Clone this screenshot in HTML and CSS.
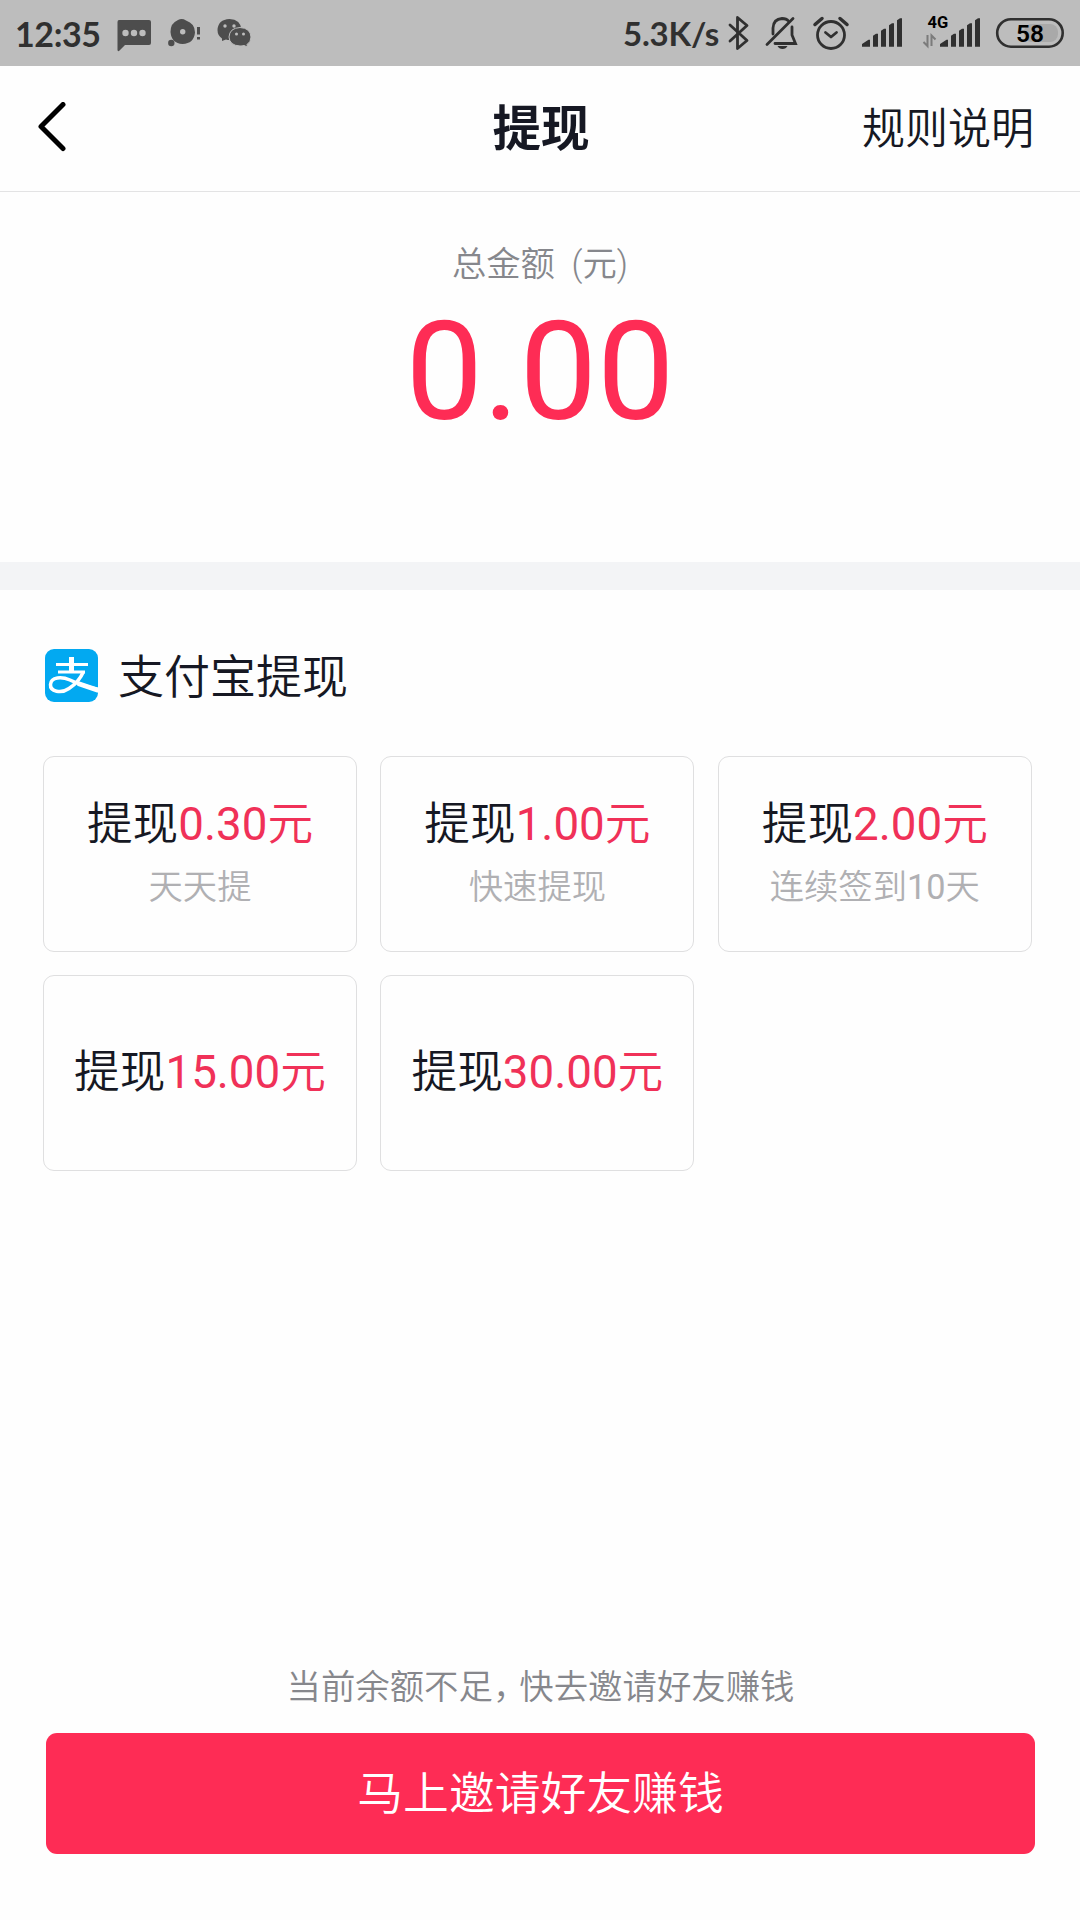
FILE: index.html
```html
<!DOCTYPE html>
<html lang="zh-CN">
<head>
<meta charset="utf-8">
<title>提现</title>
<link rel="stylesheet" href="styles.css">
</head>
<body>

<!-- status bar -->
<div class="status">
    <span class="time">12:35</span>
    <svg class="left-icons" width="136" height="40" viewBox="116 13 136 40">
        <path d="M119 20h30q2 0 2 2v21q0 2-2 2h-24l-6 6q-1.500.5-1.500-1v-28q0-2 1.500-2z" fill="#4d4d4d"/>
        <g fill="#bdbdbd"><circle cx="125.500" cy="33" r="3.200"/><circle cx="134" cy="33" r="3.200"/><circle cx="142.500" cy="33" r="3.200"/></g>
        <path d="M178 20q4-2 8 .5q9 3 9 12q-1 11-12.500 11.500q-11-.5-12-12q0-9 7.500-12z" fill="#4d4d4d"/>
        <circle cx="182.700" cy="31.700" r="2.700" fill="#bdbdbd"/>
        <circle cx="171.300" cy="43" r="3.200" fill="#4d4d4d"/>
        <path d="M197 27h3v7.500h-3zM197 37h3v2.500h-3z" fill="#4d4d4d"/>
        <path d="M222 41v-2.500q-4.500-3-4.500-8.500q.5-10.500 12-11q11 .5 12 10.500q-1 10-12 10.500q-2 0-3.500-.5z" fill="#4d4d4d"/>
        <circle cx="225" cy="26" r="1.700" fill="#bdbdbd"/><circle cx="234" cy="26" r="1.700" fill="#bdbdbd"/>
        <path d="M240 27.500q10.500.5 11 9.500q0 5-4 7.500l.5 2.500l-3.500-1.500q-2 .5-4 .5q-10.500-.5-11-9q.5-9 11-9.500z" fill="#4d4d4d" stroke="#bdbdbd" stroke-width="1"/>
        <circle cx="236.500" cy="34" r="1.500" fill="#bdbdbd"/><circle cx="243.500" cy="34" r="1.500" fill="#bdbdbd"/>
    </svg>
    <span class="speed">5.3K/s</span>
    <svg class="right-icons" width="340" height="46" viewBox="725 10 340 46">
        <!-- bluetooth -->
        <path d="M730 25l17 15.500l-9.500 8v-31l9.500 8l-17 15.500" fill="none" stroke="#303030" stroke-width="2.800" stroke-linejoin="round" stroke-linecap="round"/>
        <!-- muted bell -->
        <g fill="none" stroke="#303030" stroke-width="2.800" stroke-linecap="round">
            <path d="M767 44.500L793 18.500"/>
            <path d="M773 34v-6q.5-9 9-9.500q4.500 0 6.500 2.500M792 27v8l3.500 8.500H775"/>
        </g>
        <path d="M777.500 46h10q-1.500 3-5 3t-5-3z" fill="#303030"/>
        <!-- alarm -->
        <g fill="none" stroke="#303030" stroke-width="2.800" stroke-linecap="round" stroke-linejoin="round">
            <circle cx="831" cy="35" r="13.500"/>
            <path d="M825.500 32.500l5.500 4.500l5.500-4.500"/>
            <path d="M815 24.500l7-6M847 24.500l-7-6" stroke-width="3.500"/>
        </g>
        <!-- signal bars -->
        <path id="bars" d="M862 46.800v-2.800l6.500-4.300h1.500v7zM873 46.800v-11l3-2h2v13zM881 46.800v-16l3-2h2v18zM889 46.800v-21.500l3-2h2v23.500zM897 46.800v-26.500l3-2h2v28.500z" fill="#303030"/>
        <use href="#bars" x="78"/>
        <text class="net" x="927.500" y="28">4G</text>
        <path d="M927.500 35v11l-4-4M931.500 46v-10.500l4 4" fill="none" stroke="#7b7b7b" stroke-width="2"/>
        <!-- battery -->
        <rect x="1024" y="24" width="34" height="18" rx="8" fill="#a9a9a9"/>
        <rect x="997.200" y="19.200" width="65.500" height="27.500" rx="13.700" fill="none" stroke="#303030" stroke-width="2.600"/>
        <text class="level" x="1030" y="41.500">58</text>
    </svg>
</div>

<!-- title bar -->
<div class="header">
    <svg class="back" width="28" height="50" viewBox="0 0 28 50">
        <path d="M25 2.500L3 24.500L25 46.500" fill="none" stroke="#000" stroke-width="5" stroke-linecap="round" stroke-linejoin="round"/>
    </svg>
    <h1>提现</h1>
    <a class="rules">规则说明</a>
</div>

<div class="total">
    <div class="total-label">总金额&nbsp; (元)</div>
    <div class="total-num">0.00</div>
</div>

<div class="divider"></div>

<div class="content">
    <div class="alipay">
        <svg width="54" height="53" viewBox="0 0 54 53">
            <rect width="53" height="53" rx="9" fill="#02a9f1"/>
            <g fill="none" stroke="#fff">
                <path d="M11 15.500H43M13 23H40" stroke-width="3"/>
                <path d="M26.500 8V23" stroke-width="5"/>
                <path d="M38.500 22.500Q34 33 24 39.500C16 45 5 42.500 5.500 35.500C6 27.500 17 27.500 25 31Q36 36.500 53.500 40.500" stroke-width="3.500"/>
                <path d="M33 34.500L53.500 41.500" stroke-width="5"/>
            </g>
        </svg>
        <span>支付宝提现</span>
    </div>

    <div class="cards">
        <div class="card">
            <p class="amount">提现<b><i>0.30</i>元</b></p>
            <p class="note">天天提</p>
        </div>
        <div class="card">
            <p class="amount">提现<b><i>1.00</i>元</b></p>
            <p class="note">快速提现</p>
        </div>
        <div class="card">
            <p class="amount">提现<b><i>2.00</i>元</b></p>
            <p class="note">连续签到<i>10</i>天</p>
        </div>
        <div class="card">
            <p class="amount">提现<b><i>15.00</i>元</b></p>
        </div>
        <div class="card">
            <p class="amount">提现<b><i>30.00</i>元</b></p>
        </div>
    </div>
</div>

<div class="footer">
    <p class="tip">当前余额不足<span class="comma">，</span>快去邀请好友赚钱</p>
    <button class="invite">马上邀请好友赚钱</button>
</div>

</body>
</html>
```

FILE: styles.css
```css
* {
  box-sizing: border-box;
}

body {
  margin: 0;
  height: 1920px;
  display: flex;
  flex-direction: column;
  background: #fefefe;
  color: #161823;
  font-family: Roboto, "Noto Sans CJK SC", sans-serif;
  font-weight: 350;
}

h1, p {
  margin: 0;
}

/* digits */
i {
  font-style: normal;
  font-weight: 400;
}

/* status bar */
.status {
  height: 66px;
  display: flex;
  align-items: center;
  background: #bdbdbd;
  color: #303030;
  font-family: Lato, sans-serif;
  font-weight: 700;
}

.time {
  width: 101px;
  margin-left: 15px;
  font-size: 34px;
  letter-spacing: -0.4px;
}

.speed {
  width: 102px;
  margin-left: auto;
  font-size: 33px;
  letter-spacing: -0.2px;
  white-space: nowrap;
}

.right-icons {
  margin-right: 15px;
}

.net {
  font-family: Roboto, sans-serif;
  font-size: 16.5px;
}

.level {
  font-family: Roboto, sans-serif;
  font-size: 24.5px;
  font-weight: 600;
  text-anchor: middle;
}

/* title bar */
.header {
  height: 126px;
  display: grid;
  grid-template-columns: 1fr auto 1fr;
  align-items: center;
  padding: 0 46px 4px 38px;
  border-bottom: 1px solid #e3e3e4;
}

.header h1 {
  margin: 6px -5px 0 5px;
  font-size: 48.5px;
  line-height: 60px;
  font-weight: 700;
}

.rules {
  justify-self: end;
  margin-top: 5px;
  font-size: 43px;
  line-height: 60px;
}

/* total amount */
.total {
  height: 370px;
  padding-top: 47px;
  text-align: center;
}

.total-label {
  font-size: 34.3px;
  line-height: 50px;
  color: #86878c;
}

.total-num {
  font-size: 138px;
  line-height: 166px;
  font-weight: 400;
  color: #fe2c55;
}

.divider {
  height: 28px;
  background: #f3f4f6;
}

.content {
  padding: 59px 48px 0 43px;
}

.alipay {
  display: flex;
  align-items: center;
  gap: 19px;
  height: 54px;
  padding-left: 2px;
  font-size: 46px;
  line-height: 54px;
}

.alipay svg {
  margin-top: -2px;
}

.alipay span {
  margin-top: 2px;
}

/* withdraw options */
.cards {
  display: grid;
  grid-template-columns: repeat(3, 314px);
  grid-auto-rows: 196px;
  gap: 23px 23.4px;
  margin-top: 53px;
}

.card {
  display: flex;
  flex-direction: column;
  align-items: center;
  justify-content: center;
  border: 1px solid #dfdfe0;
  border-radius: 11px;
}

.amount {
  font-size: 45.7px;
  line-height: 66px;
  white-space: nowrap;
}

.amount b {
  font-weight: 350;
  color: #f03158;
}

.note {
  font-size: 34.3px;
  line-height: 58px;
  color: #b0b0b3;
}

/* bottom action */
.footer {
  margin-top: auto;
  padding: 0 45px 66px 46px;
  text-align: center;
}

.tip {
  font-size: 34.4px;
  line-height: 50px;
  margin-bottom: 21px;
  color: #86878c;
}

.comma {
  letter-spacing: -8px;
}

.invite {
  display: block;
  width: 100%;
  height: 121px;
  padding: 0 0 8px;
  border: none;
  border-radius: 11px;
  background: #fe2c55;
  color: #fff;
  font: inherit;
  font-size: 45.8px;
}
```
